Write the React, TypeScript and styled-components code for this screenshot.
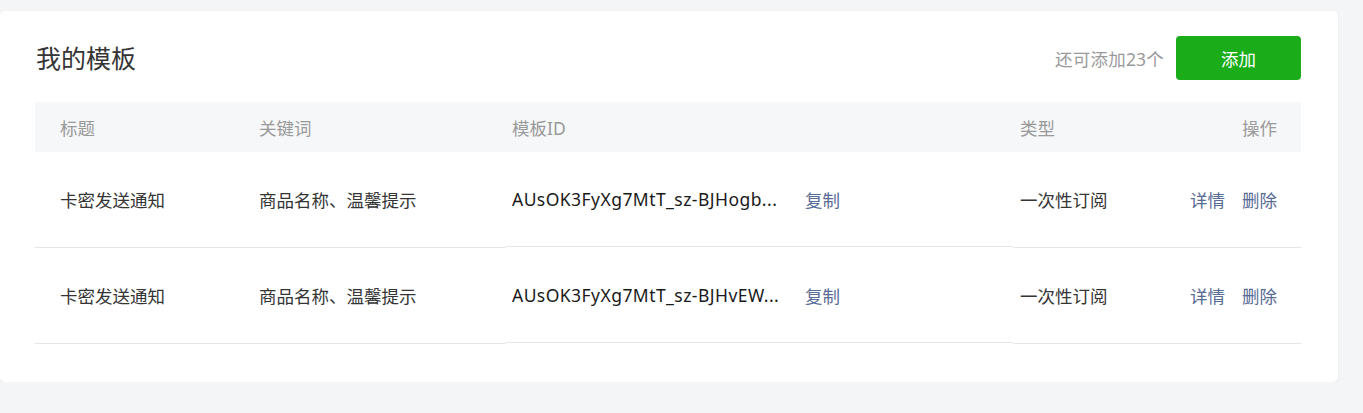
import React from "react";
import styled, { createGlobalStyle } from "styled-components";

const Global = createGlobalStyle`
  html, body { margin: 0; padding: 0; background: #f4f5f7; }
  body { font-family: "Noto Sans", "Noto Sans CJK SC", sans-serif; }
`;

const Page = styled.div`
  padding: 11px 25px 0 0;
`;

const Card = styled.div`
  width: 1338px;
  box-sizing: border-box;
  background: #fff;
  border-radius: 5px;
  box-shadow: 0 1px 2px rgba(0, 0, 0, 0.08);
  padding: 25px 37px 38px 35px;
`;

const TitleBar = styled.div`
  display: flex;
  align-items: center;
  justify-content: space-between;
  height: 44px;
  margin-bottom: 22px;
`;

const Title = styled.h2`
  margin: 0 0 0 1px;
  font-size: 25px;
  font-weight: 400;
  color: #353535;
  line-height: 1;
`;

const Right = styled.div`
  display: flex;
  align-items: center;
  gap: 12px;
`;

const Quota = styled.span`
  font-size: 17.5px;
  color: #9a9a9a;
  letter-spacing: 0.2px;
`;

const Button = styled.button`
  width: 125px;
  height: 44px;
  border: none;
  border-radius: 4px;
  background: #1aad19;
  color: #fff;
  font-family: inherit;
  font-size: 17.5px;
  cursor: pointer;
`;

const Grid = styled.div`
  display: grid;
  grid-template-columns: 200px 271px 507px 150px 138px;
`;

const HeadCell = styled.div<{ $pad: string; $right?: boolean }>`
  height: 50px;
  display: flex;
  align-items: center;
  justify-content: ${(p) => (p.$right ? "flex-end" : "flex-start")};
  background: #f6f7f9;
  padding: ${(p) => p.$pad};
  font-size: 17.5px;
  color: #9a9a9a;
`;

const Cell = styled.div<{ $pad: string; $right?: boolean; $h: number }>`
  height: ${(p) => p.$h}px;
  box-sizing: border-box;
  display: flex;
  align-items: center;
  justify-content: ${(p) => (p.$right ? "flex-end" : "flex-start")};
  padding: ${(p) => p.$pad};
  border-bottom: 1px solid #e6e6ea;
  font-size: 17.5px;
  color: #353535;
`;

const IdText = styled.span`
  width: 293px;
  white-space: nowrap;
  color: #1a1a1a;
  letter-spacing: 0.45px;
`;

const Link = styled.a`
  color: #576b95;
  text-decoration: none;
  cursor: pointer;
`;

const Actions = styled.div`
  display: flex;
  gap: 17px;
`;

const rows = [
  { title: "卡密发送通知", kw: "商品名称、温馨提示", id: "AUsOK3FyXg7MtT_sz-BJHogb...", type: "一次性订阅" },
  { title: "卡密发送通知", kw: "商品名称、温馨提示", id: "AUsOK3FyXg7MtT_sz-BJHvEW...", type: "一次性订阅" },
];

export default function App() {
  return (
    <>
      <Global />
      <Page>
        <Card>
          <TitleBar>
            <Title>我的模板</Title>
            <Right>
              <Quota>还可添加23个</Quota>
              <Button>添加</Button>
            </Right>
          </TitleBar>
          <Grid>
            <HeadCell $pad="0 0 0 25px">标题</HeadCell>
            <HeadCell $pad="0 0 0 24px">关键词</HeadCell>
            <HeadCell $pad="0 0 0 6px">模板ID</HeadCell>
            <HeadCell $pad="0 0 0 7px">类型</HeadCell>
            <HeadCell $pad="0 24px 0 0" $right>操作</HeadCell>
            {rows.map((r, i) => (
              <React.Fragment key={i}>
                <Cell $h={96} $pad="0 0 0 25px">{r.title}</Cell>
                <Cell $h={96} $pad="0 0 0 24px">{r.kw}</Cell>
                <Cell $h={95} $pad="0 0 0 6px">
                  <IdText>{r.id}</IdText>
                  <Link>复制</Link>
                </Cell>
                <Cell $h={96} $pad="0 0 0 7px">{r.type}</Cell>
                <Cell $h={96} $pad="0 24px 0 0" $right>
                  <Actions>
                    <Link>详情</Link>
                    <Link>删除</Link>
                  </Actions>
                </Cell>
              </React.Fragment>
            ))}
          </Grid>
        </Card>
      </Page>
    </>
  );
}
